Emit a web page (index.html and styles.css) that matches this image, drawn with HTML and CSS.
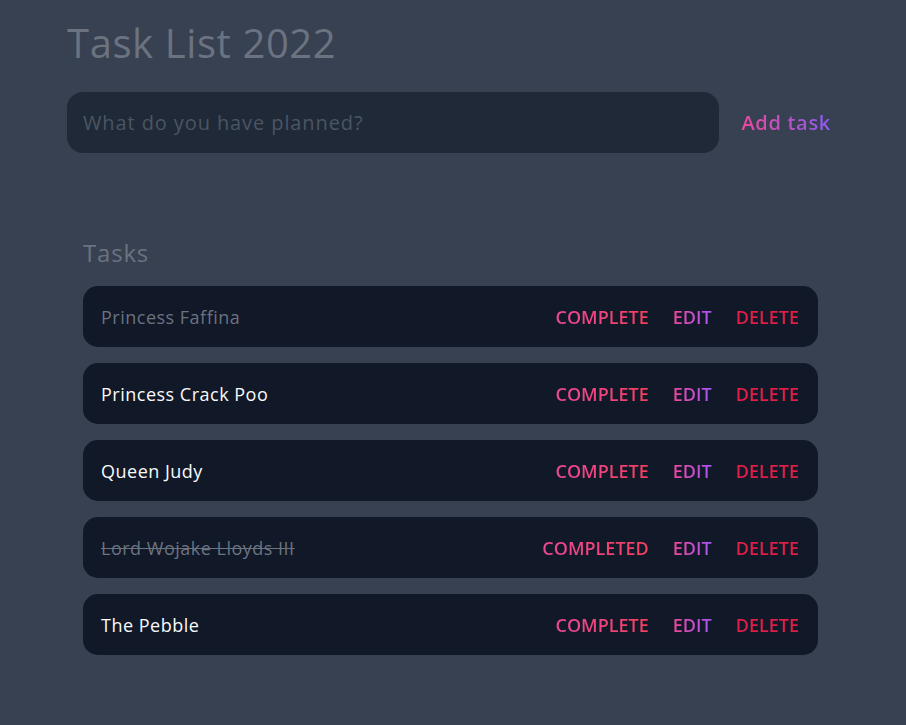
FILE: index.html
```html
<!DOCTYPE html>
<html lang="en">
<head>
<meta charset="utf-8">
<title>Task List 2022</title>
<link rel="stylesheet" href="styles.css">
</head>
<body>
<main class="app">
  <header class="header">
    <h1 class="title">Task List 2022</h1>
    <form class="new-task">
      <input class="new-task-input" type="text" placeholder="What do you have planned?">
      <button class="add-btn" type="button"><span class="grad grad-add">Add task</span></button>
    </form>
  </header>
  <section class="tasks">
    <h2 class="tasks-title">Tasks</h2>
    <div class="task-list">
      <div class="task">
        <span class="task-name muted">Princess Faffina</span>
        <div class="actions">
          <button class="act"><span class="grad grad-complete">Complete</span></button>
          <button class="act"><span class="grad grad-edit">Edit</span></button>
          <button class="act"><span class="grad grad-delete">Delete</span></button>
        </div>
      </div>
      <div class="task">
        <span class="task-name">Princess Crack Poo</span>
        <div class="actions">
          <button class="act"><span class="grad grad-complete">Complete</span></button>
          <button class="act"><span class="grad grad-edit">Edit</span></button>
          <button class="act"><span class="grad grad-delete">Delete</span></button>
        </div>
      </div>
      <div class="task">
        <span class="task-name">Queen Judy</span>
        <div class="actions">
          <button class="act"><span class="grad grad-complete">Complete</span></button>
          <button class="act"><span class="grad grad-edit">Edit</span></button>
          <button class="act"><span class="grad grad-delete">Delete</span></button>
        </div>
      </div>
      <div class="task">
        <span class="task-name done">Lord Wojake Lloyds III</span>
        <div class="actions">
          <button class="act"><span class="grad grad-complete">Completed</span></button>
          <button class="act"><span class="grad grad-edit">Edit</span></button>
          <button class="act"><span class="grad grad-delete">Delete</span></button>
        </div>
      </div>
      <div class="task">
        <span class="task-name">The Pebble</span>
        <div class="actions">
          <button class="act"><span class="grad grad-complete">Complete</span></button>
          <button class="act"><span class="grad grad-edit">Edit</span></button>
          <button class="act"><span class="grad grad-delete">Delete</span></button>
        </div>
      </div>
    </div>
  </section>
</main>
</body>
</html>
```
FILE: styles.css
```css
* { box-sizing: border-box; }
html, body { margin: 0; padding: 0; }
body {
  background: #374151;
  font-family: "Open Sans", "Noto Sans", sans-serif;
  color: #f9fafb;
  min-height: 725px;
}
.app {
  padding: 19px 67px 0 67px;
}
.title {
  margin: 0;
  font-size: 40px;
  line-height: 48px;
  font-weight: 400;
  letter-spacing: 0.6px;
  color: #6b7280;
}
.new-task {
  display: flex;
  align-items: center;
  gap: 14px;
  margin-top: 25px;
}
.new-task-input {
  flex: 1;
  height: 61px;
  border: none;
  outline: none;
  border-radius: 16px;
  background: #1f2937;
  padding: 0 16px;
  font-family: inherit;
  font-size: 20px;
  letter-spacing: 0.9px;
  color: #f9fafb;
}
.new-task-input::placeholder { color: #4b5563; }
.add-btn {
  background: none;
  border: none;
  padding: 0 8px;
  font-family: inherit;
  font-size: 20px;
  font-weight: 600;
  letter-spacing: 0.7px;
  cursor: pointer;
}
.grad {
  -webkit-background-clip: text;
  background-clip: text;
  color: transparent;
}
.grad-add { background-image: linear-gradient(to right, #ec4899, #8b5cf6); }
.tasks {
  padding: 0 21px 0 16px;
  margin-top: 85px;
}
.tasks-title {
  margin: 0 0 19px 0;
  font-size: 24px;
  line-height: 29px;
  font-weight: 400;
  letter-spacing: 0.8px;
  color: #6b7280;
}
.task-list {
  display: flex;
  flex-direction: column;
  gap: 16px;
}
.task {
  display: flex;
  align-items: center;
  justify-content: space-between;
  height: 61px;
  padding: 0 19px 0 18px;
  background: #111827;
  border-radius: 15px;
}
.task-name {
  font-size: 18px;
  letter-spacing: 0.5px;
  color: #f9fafb;
}
.task-name.muted { color: #6b7280; }
.task-name.done {
  color: #6b7280;
  text-decoration: line-through;
}
.actions {
  display: flex;
  gap: 24px;
}
.act {
  background: none;
  border: none;
  padding: 0;
  font-family: inherit;
  font-size: 18px;
  font-weight: 600;
  text-transform: uppercase;
  cursor: pointer;
}
.grad-complete { background-image: linear-gradient(to right, #ec4899, #f43f5e); }
.grad-edit { background-image: linear-gradient(to right, #ec4899, #a855f7); }
.grad-delete { background-image: linear-gradient(to right, #e11d48, #e11d48); }
```
